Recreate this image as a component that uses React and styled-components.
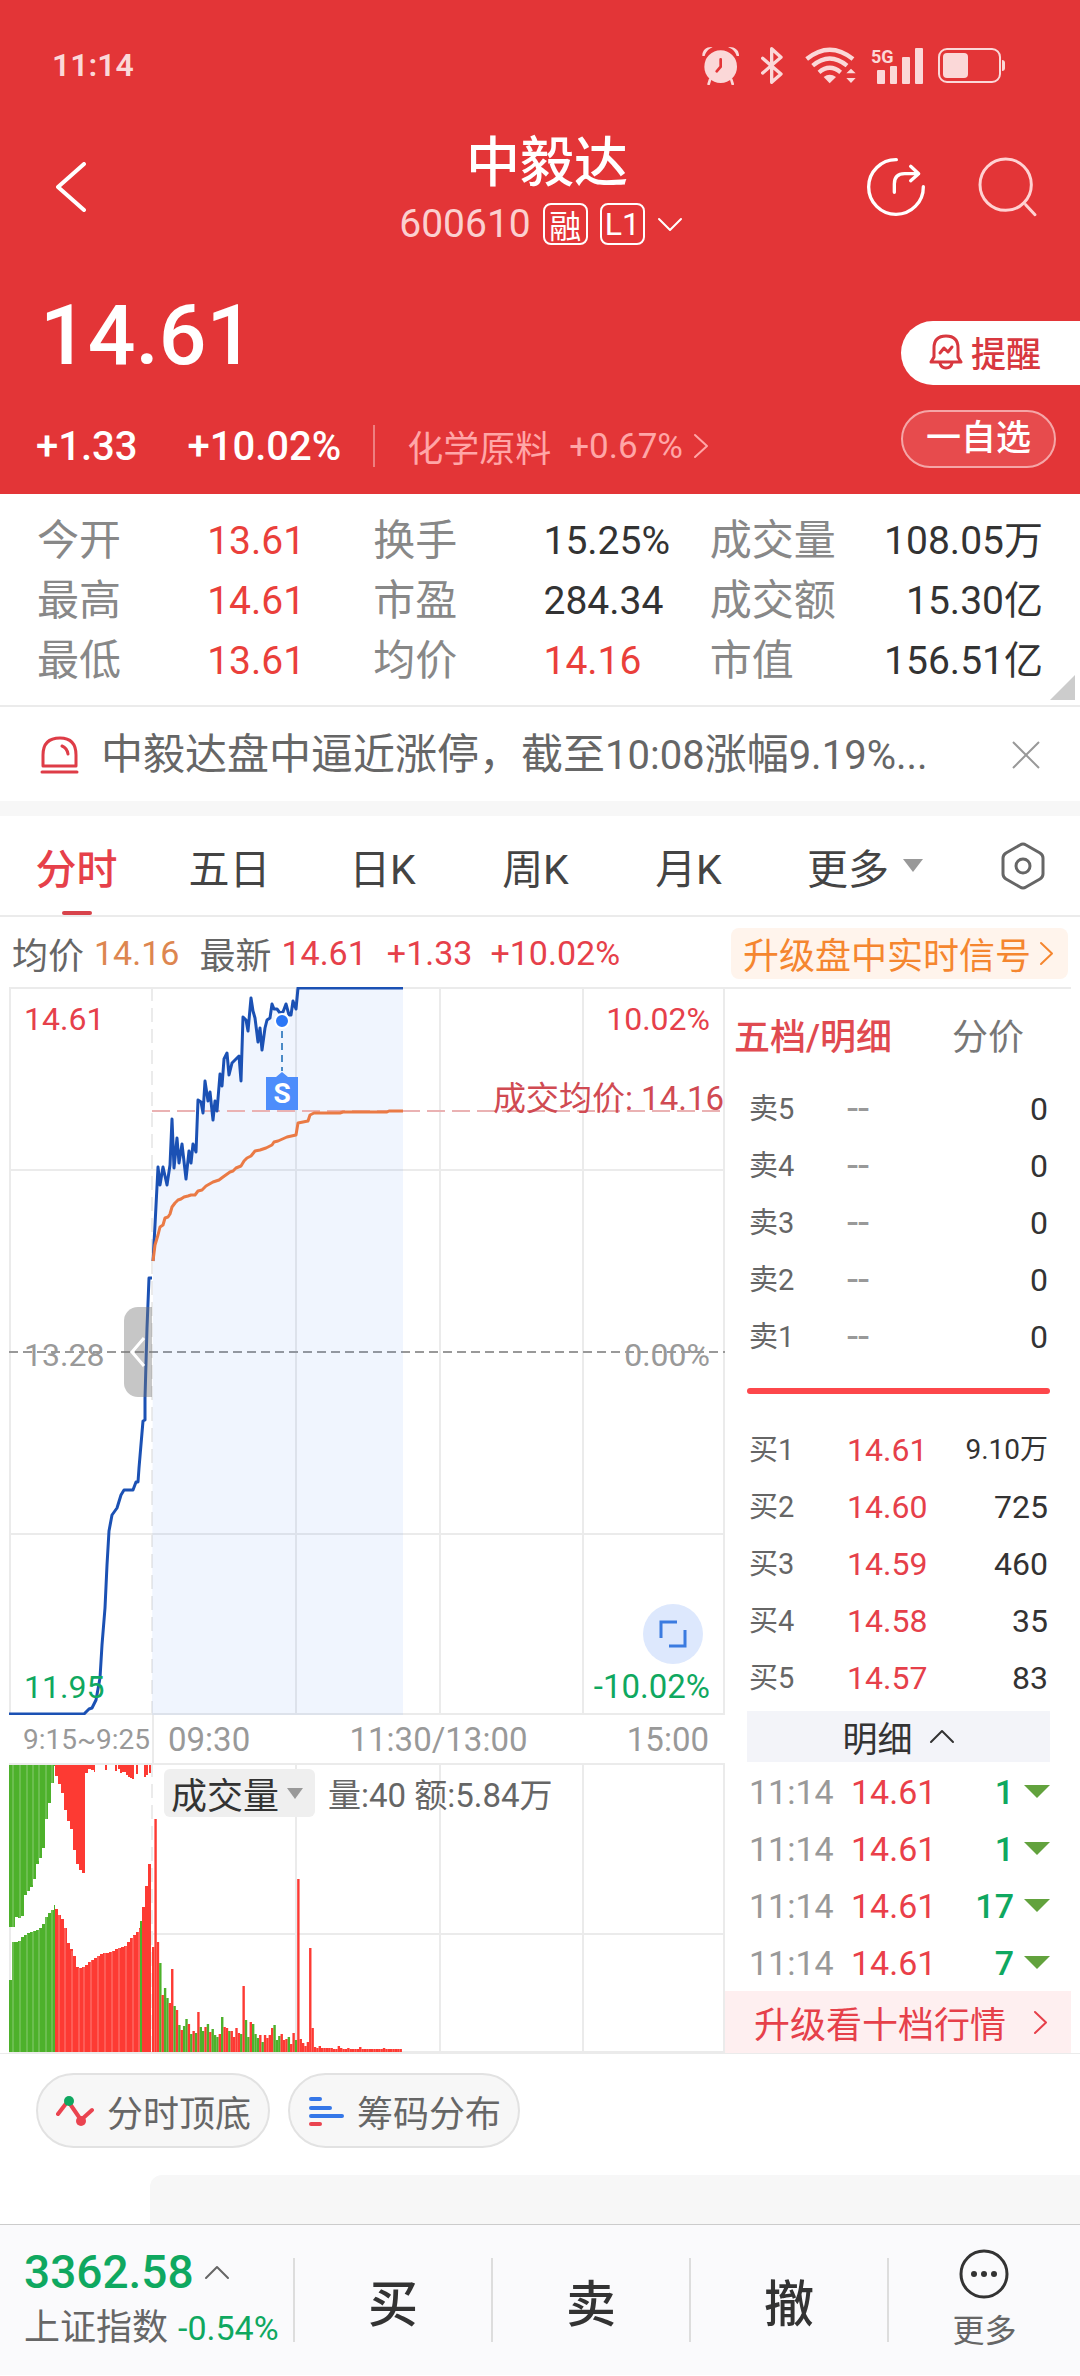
import React from 'react';
import styled, { createGlobalStyle } from 'styled-components';

const RED = '#e33537';
const UP = '#e6404a';
const DOWN = '#0fa860';
const LINE = '#ebebeb';

const GlobalStyle = createGlobalStyle`
	* {
		box-sizing: border-box;
	}
	body {
		margin: 0;
		background: #fff;
		font-family: Roboto, "Noto Sans CJK SC", sans-serif;
		color: #333;
	}
	button {
		margin: 0;
		padding: 0;
		border: 0;
		background: none;
		font: inherit;
		color: inherit;
		cursor: pointer;
	}
	h1, p, dl, dt, dd {
		margin: 0;
		font-weight: 400;
	}
	svg {
		display: block;
		flex: none;
	}
`;

const Page = styled.div`
	display: flex;
	flex-direction: column;
	width: 100%;
`;

/* ---------- header ---------- */

const Header = styled.header`
	background: ${RED};
	color: #fff;
`;

const StatusBar = styled.div`
	display: flex;
	align-items: center;
	height: 130px;
	padding: 0 74px 0 52px;
	color: #fbd8d8;
`;

const Clock = styled.span`
	margin-right: auto;
	font-size: 32px;
	font-weight: 600;
`;

const StatusIcons = styled.div`
	display: flex;
	align-items: center;
	gap: ${(p) => p.$gap}px;
`;

const NavBar = styled.div`
	display: grid;
	grid-template-columns: 1fr auto 1fr;
	align-items: center;
	padding: 0 42px 0 56px;
`;

const NavActions = styled.div`
	display: flex;
	justify-content: flex-end;
	gap: 52px;
`;

const IconButton = styled.button`
	display: flex;
	justify-self: start;
`;

const TitleBlock = styled.div`
	display: flex;
	flex-direction: column;
	align-items: center;
	gap: 6px;
`;

const Title = styled.h1`
	font-size: 54px;
	line-height: 68px;
	font-weight: 500;
`;

const CodeRow = styled.button`
	display: flex;
	align-items: center;
	gap: 12px;
	height: 40px;
	margin-right: 12px;
`;

const Code = styled.span`
	font-size: 39px;
	color: #fbd0d0;
`;

const Badge = styled.span`
	display: flex;
	align-items: center;
	justify-content: center;
	width: 45px;
	height: 42px;
	border: 2px solid #fff;
	border-radius: 8px;
	font-size: 32px;
`;

const Quote = styled.div`
	display: flex;
	justify-content: space-between;
	padding: 56px 0 26px 36px;
`;

const QuoteLeft = styled.div`
	display: flex;
	flex-direction: column;
	gap: 52px;
`;

const Price = styled.p`
	margin-left: 4px;
	font-size: 84px;
	line-height: 72px;
	font-weight: 500;
`;

const ChangeRow = styled.div`
	display: flex;
	align-items: center;
	height: 44px;
	font-size: 40px;
	font-weight: 500;
`;

const Change = styled.span`
	margin-right: ${(p) => p.$gap}px;
`;

const Sector = styled.a`
	display: flex;
	align-items: center;
	gap: 18px;
	height: 42px;
	padding-left: 32px;
	border-left: 2px solid #ee7f80;
	font-size: 36px;
	font-weight: 400;
	color: #ffa6a7;
	text-decoration: none;
`;

const QuoteRight = styled.div`
	display: flex;
	flex-direction: column;
	align-items: flex-end;
	gap: 25px;
	padding-top: 21px;
`;

const RemindButton = styled.button`
	display: flex;
	align-items: center;
	gap: 8px;
	width: 179px;
	height: 64px;
	padding: 0 0 3px 28px;
	border-radius: 32px 0 0 32px;
	background: #fff;
	color: #d8383f;
	font-size: 35px;
	font-weight: 500;
`;

const WatchButton = styled.button`
	width: 155px;
	height: 58px;
	margin-right: 24px;
	border: 2px solid #f5a6a7;
	border-radius: 29px;
	background: #e74b4d;
	font-size: 35px;
	font-weight: 500;
	line-height: 50px;
`;

/* ---------- stats and notice ---------- */

const Stats = styled.dl`
	position: relative;
	display: grid;
	grid-template-columns: 170fr 166fr 170fr 166fr 150fr 183fr;
	grid-auto-rows: 60px;
	align-items: center;
	padding: 17px 37px 14px 37px;
	border-bottom: 2px solid ${LINE};
`;

const StatLabel = styled.dt`
	font-size: 42px;
	line-height: 60px;
	color: #888;
	white-space: nowrap;
`;

const StatValue = styled.dd`
	font-size: 39px;
	line-height: 60px;
	color: ${(p) => (p.$up ? '#ea3f3b' : '#333')};
	text-align: ${(p) => (p.$last ? 'right' : 'left')};
	white-space: nowrap;
`;

const Corner = styled.div`
	position: absolute;
	right: 5px;
	bottom: 5px;
	border-left: 25px solid transparent;
	border-bottom: 25px solid #ccc;
`;

const Notice = styled.div`
	display: flex;
	align-items: center;
	height: 94px;
	padding: 2px 40px 0;
`;

const NoticeText = styled.p`
	flex: 1;
	margin-left: 22px;
	font-size: 42px;
	line-height: 60px;
	color: #666;
	white-space: nowrap;
	overflow: hidden;
`;

const Num = styled.span`
	font-size: 40px;
`;

const Divider = styled.div`
	height: 15px;
	background: #f7f7f7;
`;

/* ---------- period tabs ---------- */

const Tabs = styled.nav`
	display: grid;
	grid-template-columns: repeat(5, 153fr) 200fr 115fr;
	height: 101px;
	border-bottom: 2px solid ${LINE};
`;

const Tab = styled.button`
	position: relative;
	display: flex;
	align-items: center;
	justify-content: center;
	gap: 14px;
	font-size: 41px;
	font-weight: ${(p) => (p.$active ? 500 : 400)};
	color: ${(p) => (p.$active ? UP : '#444')};

	&::after {
		content: '';
		display: ${(p) => (p.$active ? 'block' : 'none')};
		position: absolute;
		bottom: 0;
		width: 30px;
		height: 4px;
		border-radius: 2px;
		background: #d8434b;
	}
`;

const Triangle = styled.span`
	border: ${(p) => p.$size}px solid transparent;
	border-top: ${(p) => p.$drop}px solid ${(p) => p.$color};
	border-bottom: 0;
`;

const InfoRow = styled.div`
	display: flex;
	align-items: center;
	gap: 20px;
	height: 70px;
	padding: 2px 12px 0;
	font-size: 36px;
	color: #666;
`;

const InfoGroup = styled.span`
	display: flex;
	align-items: center;
	gap: ${(p) => p.$gap || 10}px;
	white-space: nowrap;
`;

const InfoNum = styled.span`
	font-size: ${(p) => p.$size || 34}px;
	color: ${(p) => p.$color};
`;

const SignalLink = styled.a`
	display: flex;
	align-items: center;
	gap: 8px;
	height: 51px;
	margin-left: auto;
	padding: 0 14px 0 12px;
	border-radius: 8px;
	background: #fff4ec;
	color: #f5862f;
	text-decoration: none;
	white-space: nowrap;
`;

/* ---------- charts ---------- */

const Board = styled.main`
	display: grid;
	grid-template-columns: 716fr 346fr;
	padding: 0 9px;
	border-bottom: 1px solid ${LINE};
`;

const Charts = styled.section`
	display: flex;
	flex-direction: column;
	min-width: 0;
`;

const ChartBox = styled.div`
	position: relative;

	> svg {
		width: 100%;
		height: auto;
	}
`;

const Mark = styled.span`
	position: absolute;
	${(p) => p.$side}: ${(p) => p.$inset}px;
	${(p) => p.$edge || 'top'}: ${(p) => p.$at}px;
	font-size: ${(p) => p.$size || 32}px;
	line-height: 40px;
	color: ${(p) => p.$color};
	white-space: nowrap;
`;

const Handle = styled.button`
	position: absolute;
	left: 16%;
	top: 44%;
	display: flex;
	align-items: center;
	justify-content: center;
	width: 28px;
	height: 90px;
	border-radius: 14px 0 0 14px;
	background: rgba(118, 118, 118, 0.42);
`;

const ExpandButton = styled.button`
	position: absolute;
	right: 22px;
	bottom: 51px;
	display: flex;
	align-items: center;
	justify-content: center;
	width: 60px;
	height: 60px;
	border-radius: 30px;
	background: #dde8fd;
`;

const Axis = styled.div`
	display: grid;
	grid-template-columns: 143fr 573fr;
	height: 48px;
	line-height: 50px;
	font-size: 33px;
	color: #999;
`;

const AuctionTime = styled.span`
	padding-right: 2px;
	font-size: 28px;
	text-align: right;
`;

const SessionTimes = styled.div`
	display: flex;
	justify-content: space-between;
	padding: 0 16px 0 14px;
	border-left: 2px solid ${LINE};
`;

const VolumeHead = styled.div`
	position: absolute;
	left: 155px;
	top: 6px;
	display: flex;
	align-items: center;
	gap: 13px;
	font-size: 33px;
	color: #666;
`;

const VolumeButton = styled.button`
	display: flex;
	align-items: center;
	gap: 8px;
	height: 48px;
	padding: 0 12px 0 7px;
	border-radius: 6px;
	background: #efefef;
	font-size: 36px;
	color: #333;
`;

/* ---------- order book ---------- */

const Book = styled.aside`
	display: flex;
	flex-direction: column;
	border-top: 2px solid ${LINE};
`;

const BookTabs = styled.div`
	display: flex;
	gap: 60px;
	height: 91px;
	padding: 0 0 0 9px;
`;

const BookTab = styled.button`
	height: 90px;
	font-size: 36px;
	color: ${(p) => (p.$active ? '#e04a50' : '#777')};
	font-weight: ${(p) => (p.$active ? 500 : 400)};
`;

const Table = styled.table`
	margin: 0 21px 0 22px;
	border-collapse: collapse;
	table-layout: fixed;
	font-size: 32px;

	tr {
		height: 57px;
	}
	th,
	td {
		padding: 0 2px;
		line-height: 40px;
		text-align: left;
		font-weight: 400;
		white-space: nowrap;
	}
	td:last-child {
		text-align: right;
	}
`;

const Level = styled.th`
	width: 98px;
	font-size: 29px;
	color: #666;
`;

const LevelPrice = styled.td`
	color: ${(p) => (p.$empty ? '#999' : UP)};
	font-size: ${(p) => (p.$empty ? 40 : 32)}px;
`;

const LevelQty = styled.td`
	font-size: ${(p) => (p.$long ? 28 : 32)}px;
`;

const BidWrap = styled.div`
	display: flex;
	align-items: center;
	height: 56px;
	margin: 0 21px 0 22px;
	padding-bottom: 4px;
`;

const BidBar = styled.div`
	flex: 1;
	height: 6px;
	border-radius: 3px;
	background: #fd474b;
`;

const DetailButton = styled.button`
	display: flex;
	align-items: center;
	justify-content: center;
	gap: 16px;
	height: 51px;
	margin: 5px 21px 1px 22px;
	background: #f3f4f9;
	font-size: 35px;
`;

const TickTable = styled(Table)`
	font-size: 34px;
`;

const TickTime = styled.td`
	width: 102px;
	color: #999;
`;

const TickPrice = styled.td`
	color: #ea3f49;
`;

const TickQty = styled.div`
	display: flex;
	align-items: center;
	justify-content: flex-end;
	gap: 10px;
	margin-right: -2px;
	color: ${DOWN};
	font-weight: 500;
`;

const Upgrade = styled.a`
	display: flex;
	align-items: center;
	justify-content: space-between;
	flex: 1;
	padding: 0 23px 0 29px;
	background: #feeff0;
	font-size: 36px;
	color: ${UP};
	text-decoration: none;
	white-space: nowrap;
`;

/* ---------- tools and footer ---------- */

const Tools = styled.div`
	display: flex;
	gap: 18px;
	padding: 19px 36px 27px;
`;

const ToolButton = styled.button`
	display: flex;
	align-items: center;
	gap: 13px;
	height: 75px;
	padding: 0 17px 0 18px;
	border: 2px solid #e2e2e2;
	border-radius: 38px;
	background: #f7f7f7;
	font-size: 36px;
	color: #666;
`;

const NextCard = styled.div`
	height: 49px;
	margin-left: 150px;
	border-radius: 12px 0 0 0;
	background: #f7f7f7;
`;

const Footer = styled.footer`
	display: grid;
	grid-template-columns: 293fr 198fr 198fr 198fr 193fr;
	align-items: center;
	height: 151px;
	border-top: 1px solid #ccc;
	background: #fafafc;
`;

const IndexButton = styled.button`
	display: flex;
	flex-direction: column;
	gap: 8px;
	padding-left: 24px;
	font-size: 36px;
	line-height: 48px;
	color: #666;
	white-space: nowrap;
`;

const IndexLine = styled.span`
	display: flex;
	align-items: center;
	gap: 10px;
`;

const IndexValue = styled.span`
	font-size: 46px;
	font-weight: 500;
	color: ${DOWN};
`;

const IndexChange = styled.span`
	font-size: 34px;
	color: ${DOWN};
`;

const TradeButton = styled.button`
	height: 84px;
	border-left: 2px solid #ddd;
	font-size: 50px;
	font-weight: 500;
`;

const MoreButton = styled.button`
	display: flex;
	flex-direction: column;
	align-items: center;
	gap: 12px;
	font-size: 32px;
	line-height: 40px;
	color: #666;
`;

const MoreWrap = styled.div`
	display: flex;
	align-items: center;
	justify-content: center;
	height: 84px;
	border-left: 2px solid #ddd;
`;

/* ---------- data ---------- */

const stats = [
	['今开', '13.61', true],
	['换手', '15.25%'],
	['成交量', '108.05万'],
	['最高', '14.61', true],
	['市盈', '284.34'],
	['成交额', '15.30亿'],
	['最低', '13.61', true],
	['均价', '14.16', true],
	['市值', '156.51亿'],
];

const asks = [
	['卖5', '--', '0'],
	['卖4', '--', '0'],
	['卖3', '--', '0'],
	['卖2', '--', '0'],
	['卖1', '--', '0'],
];

const bids = [
	['买1', '14.61', '9.10万'],
	['买2', '14.60', '725'],
	['买3', '14.59', '460'],
	['买4', '14.58', '35'],
	['买5', '14.57', '83'],
];

const ticks = [1, 1, 17, 7];

const auctionLine =
	'0,727 75,727 80,722 83,721 87,713 91,691 93,658 96,621 98,578 100,544 103,528 108,521 112,508 115,503 124,503 127,495 129,495 130,481 134,434 136,433 136,411 138,341 140,291 143,291';

const priceLine =
	'144,274 146,238 149,180 151,198 154,180 158,198 161,178 163,132 165,181 168,151 170,176 173,157 177,192 180,164 182,176 184,157 187,165 189,113 192,115 194,126 196,94 199,114 201,105 204,133 206,114 208,124 211,87 213,99 215,72 218,66 220,88 223,76 227,72 230,69 232,94 234,30 237,33 239,44 242,11 244,24 246,31 249,55 251,41 253,63 256,41 258,33 261,31 263,17 265,22 268,22 271,26 274,25 277,17 280,28 282,28 284,14 287,22 289,1 394,1';

const averageLine =
	'144,274 146,258 149,248 151,240 154,238 156,231 159,230 161,227 163,220 166,216 169,213 172,212 175,210 179,209 182,208 186,208 189,204 193,203 197,199 204,195 210,193 214,190 221,185 224,184 227,181 232,179 235,174 238,171 242,169 246,164 251,163 257,161 263,158 265,155 269,154 278,150 287,148 289,136 294,135 299,134 301,128 305,126 331,126 334,125 378,125 380,124 394,124';

// auction envelopes: [x, y] corners, filled in with 3px bars
const unmatchedSell = [[0, 164], [4, 164], [6, 153], [9, 156], [13, 153], [16, 132], [19, 128], [24, 122], [27, 103], [30, 98], [34, 85], [36, 60], [39, 48], [42, 25], [44, 14], [46, 3]];
const unmatchedBuy = [[46, 10], [49, 18], [53, 30], [56, 47], [59, 58], [63, 68], [66, 97], [69, 103], [72, 109], [75, 111], [76, 13], [78, 6], [83, 7], [86, 9]];
const matchedSell = [[0, 242], [2, 191], [4, 179], [10, 178], [15, 172], [21, 169], [30, 166], [34, 161], [36, 156], [39, 151], [42, 149], [46, 142]];
const matchedBuy = [[46, 144], [50, 152], [53, 156], [56, 165], [59, 180], [62, 186], [65, 193], [67, 204], [71, 205], [77, 202], [81, 198], [86, 195], [92, 191], [100, 189], [108, 186], [116, 183], [118, 180], [122, 175], [126, 171], [131, 165]];
const strayBuys = [[96, 5], [106, 6], [109, 4], [111, 8], [113, 7], [115, 7], [117, 10], [119, 12], [121, 13], [123, 14], [127, 9], [135, 12], [137, 10], [140, 8]];

const minuteVolume =
	'105r 233r 110r 89g 57r 64g 54g 49r 83r 46g 42r 27g 22r 26g 33g 28r 18g 21r 19g 40r 25g 21g 25r 28g 20r 23g 17g 15g 18r 35g 25r 24r 21g 21r 15r 24r 19r 18g 66r 32g 15g 30r 28g 18g 14g 17r 10g 17r 14r 17r 24r 27g 12g 16g 18r 12r 13r 15g 8r 19r 12g 173r 13r 9r 6r 10r 104r 24r 5r 4r 6r 4r 4r 4r 4r 4r 3r 3r 6r 4r 3r 3r 4r 3r 3r 3r 3r 5r 3r 3r 3r 3r 3r 3r 3r 3r 3r 4r 3r 3r 3r 3r 3r 3r 3r'.split(' ');

const BAR_GREEN = '#4db12b';
const BAR_RED = '#fd3a33';

function levelAt(points, x) {
	const i = points.findIndex((p) => p[0] > x);
	if (i < 0) return points[points.length - 1][1];
	if (i === 0) return points[0][1];
	const [x0, y0] = points[i - 1];
	const [x1, y1] = points[i];
	return Math.round(y0 + ((y1 - y0) * (x - x0)) / (x1 - x0));
}

function Envelope({ points, from, color }) {
	const start = points[0][0];
	const end = points[points.length - 1][0];
	const bars = [];
	for (let x = start; x < end; x += 3) {
		const y = levelAt(points, x + 1);
		bars.push(
			<rect key={x} x={x} width={Math.min(3, end - x)} y={Math.min(y, from)} height={Math.abs(from - y)} fill={color} />
		);
	}
	return <g shapeRendering="crispEdges">{bars}</g>;
}

/* ---------- drawings ---------- */

function Chevron({ dir, width, height, stroke = 2 }) {
	const w = width - 2;
	const h = height - 2;
	const paths = {
		left: `M${w} 2L2 ${height / 2}L${w} ${h}`,
		right: `M2 2L${w} ${height / 2}L2 ${h}`,
		up: `M2 ${h}L${width / 2} 2L${w} ${h}`,
		down: `M2 2L${width / 2} ${h}L${w} 2`,
	};
	return (
		<svg width={width} height={height} fill="none" stroke="currentColor" strokeWidth={stroke}>
			<path d={paths[dir]} strokeLinecap="round" strokeLinejoin="round" />
		</svg>
	);
}

function AlarmIcon() {
	return (
		<svg width="37" height="39" viewBox="42 46 111 117" fill="currentColor">
			<circle cx="98" cy="108" r="49" />
			<path d="M43 76C42 58 56 47 74 49C64 54 54 61 50 76ZM153 76C154 58 140 47 120 49C132 54 142 61 146 76Z" />
			<path d="M66 147L62 160M130 147L134 160" stroke="currentColor" strokeWidth="8" strokeLinecap="round" />
			<path d="M98 86V108L86 122" fill="none" stroke={RED} strokeWidth="8" strokeLinecap="round" />
		</svg>
	);
}

function BluetoothIcon() {
	return (
		<svg width="22" height="39" viewBox="217 46 66 117" fill="none" stroke="currentColor" strokeWidth="10">
			<path d="M222 83L277 130L249 155V54L277 80L222 127" strokeLinejoin="round" strokeLinecap="round" />
		</svg>
	);
}

function WifiIcon() {
	return (
		<svg width="51" height="39" viewBox="348 46 153 117" fill="none" stroke="currentColor" strokeWidth="13">
			<path d="M353 85Q422 29 492 85M371 105Q422 62 474 105M390 125Q422 98 455 125" />
			<path d="M404 139Q422 126 441 139L422 158Z" fill="currentColor" stroke="none" />
			<path d="M472 128L486 114L500 128ZM472 142L486 157L500 142Z" fill="currentColor" stroke="none" />
		</svg>
	);
}

function SignalIcon() {
	return (
		<svg width="52" height="40" viewBox="0 0 52 40" fill="currentColor">
			<text x="0" y="18" fontSize="18" fontWeight="700">5G</text>
			<rect x="6" y="25" width="8" height="14" rx="1" />
			<rect x="19" y="21" width="7" height="18" rx="1" />
			<rect x="31" y="12" width="8" height="27" rx="1" />
			<rect x="44" y="3" width="8" height="36" rx="1" />
		</svg>
	);
}

function BatteryIcon() {
	return (
		<svg width="68" height="35" viewBox="0 0 68 35">
			<rect x="1" y="1" width="61" height="33" rx="8" fill="none" stroke="currentColor" strokeWidth="2" />
			<rect x="5" y="5" width="25" height="25" rx="4" fill="currentColor" />
			<path d="M64 12Q67 12 67 15V20Q67 23 64 23Z" fill="currentColor" />
		</svg>
	);
}

function ShareIcon() {
	return (
		<svg width="60" height="60" viewBox="522 378 180 180" fill="none" stroke="currentColor" strokeWidth="10" strokeLinecap="round" strokeLinejoin="round">
			<path d="M613 386A82 82 0 1 0 694 467" />
			<path d="M607 484V459Q607 428 638 428H680M656 406L680 428L656 449" />
		</svg>
	);
}

function SearchIcon() {
	return (
		<svg width="60" height="60" viewBox="862 376 180 180" fill="none" stroke="#ffd2d2" strokeWidth="9" strokeLinecap="round">
			<circle cx="945" cy="459" r="77" />
			<path d="M1005 519L1033 549" />
		</svg>
	);
}

function BellIcon() {
	return (
		<svg width="34" height="36" viewBox="0 0 34 36" fill="none" stroke="currentColor" strokeWidth="3" strokeLinejoin="round" strokeLinecap="round">
			<path d="M5 23V14Q5 2 17 2Q29 2 29 14V23L32 28H2L5 23Z" />
			<path d="M11 29Q12 34 17 34Q22 34 23 29" />
			<path d="M11 19L15 14L19 18L23 13" />
		</svg>
	);
}

function SirenIcon() {
	return (
		<svg width="39" height="39" viewBox="0 0 39 39" fill="none" stroke="#de3c47" strokeWidth="3">
			<path d="M3 30V19Q3 2 20 2Q36 2 36 19V30Z" strokeLinejoin="round" />
			<path d="M2 36H37" strokeLinecap="round" />
			<path d="M22 10Q27 12 28 18" strokeLinecap="round" />
		</svg>
	);
}

function CloseIcon() {
	return (
		<svg width="28" height="28" viewBox="0 0 28 28" stroke="#999" strokeWidth="2">
			<path d="M1 1L27 27M27 1L1 27" />
		</svg>
	);
}

function SettingsIcon() {
	return (
		<svg width="44" height="48" viewBox="0 0 44 48" fill="none" stroke="#666" strokeWidth="3" strokeLinejoin="round">
			<path d="M19 3Q22 1 25 3L39 11Q42 13 42 16V32Q42 35 39 37L25 45Q22 47 19 45L5 37Q2 35 2 32V16Q2 13 5 11Z" />
			<circle cx="22" cy="24" r="7" />
		</svg>
	);
}

function PriceChart() {
	return (
		<svg viewBox="0 0 716 728" role="img" aria-label="分时走势">
			<g stroke={LINE} strokeWidth="2" fill="none">
				<path d="M0 1H716M0 183H716M0 547H716M0 727H716" />
				<path d="M1 0V728M287 0V728M431 0V728M574 0V728M715 0V728" />
				<path d="M143 0V728" strokeDasharray="14 7" />
			</g>
			<path d="M0 365H716" stroke="#999" strokeWidth="2" strokeDasharray="9 5" />
			<polygon points={`143,728 ${priceLine} 394,728`} fill="#3f7df0" fillOpacity="0.08" />
			<path d="M143 124H716" stroke="#eab2b3" strokeWidth="2" strokeDasharray="18 7" />
			<g fill="none" strokeWidth="3" strokeLinejoin="round">
				<polyline points={auctionLine} stroke="#1b51b4" />
				<polyline points={priceLine} stroke="#1b51b4" />
				<polyline points={averageLine} stroke="#ea7a45" />
			</g>
			<path d="M273 44V84" stroke="#4a8ac6" strokeWidth="2" strokeDasharray="7 5" />
			<circle cx="273" cy="34" r="7" fill="#2a76f6" stroke="#fff" strokeWidth="2" />
			<path d="M257 90H267L273 85L279 90H289V123H257Z" fill="#4d8dfb" />
			<text x="273" y="116" fontSize="28" fontWeight="700" textAnchor="middle" fill="#fff">S</text>
		</svg>
	);
}

function VolumeChart() {
	return (
		<svg viewBox="0 0 716 290" role="img" aria-label="成交量">
			<g stroke={LINE} strokeWidth="2" fill="none">
				<path d="M0 1H716M143 171H716M0 289H716" />
				<path d="M1 0V290M287 0V290M431 0V290M574 0V290M715 0V290" />
				<path d="M143 0V290" strokeDasharray="14 7" />
			</g>
			<Envelope points={unmatchedSell} from={2} color={BAR_GREEN} />
			<Envelope points={unmatchedBuy} from={2} color={BAR_RED} />
			<Envelope points={matchedSell} from={289} color={BAR_GREEN} />
			<Envelope points={matchedBuy} from={289} color={BAR_RED} />
			<g fill={BAR_RED}>
				{strayBuys.map(([x, h]) => (
					<rect key={x} x={x} y="2" width="2" height={h} />
				))}
				<rect x="133" y="144" width="3" height="145" />
				<rect x="136" y="123" width="3" height="166" />
				<rect x="139" y="101" width="3" height="188" />
				<rect x="131" y="158" width="2" height="131" fill={BAR_GREEN} />
			</g>
			<g stroke="#fff" strokeOpacity="0.35">
				{[4, 11, 18, 24, 30, 37, 43].map((x) => (
					<path key={x} d={`M${x} 2V${levelAt(unmatchedSell, x)}M${x} ${levelAt(matchedSell, x)}V289`} />
				))}
				{[50, 56, 63, 70, 75, 82, 89, 96, 103, 110, 117, 124, 130].map((x) => (
					<path key={x} d={`M${x} ${levelAt(matchedBuy, x)}V289`} />
				))}
			</g>
			{minuteVolume.map((v, i) => {
				const h = parseInt(v, 10);
				return (
					<rect key={i} x={143 + i * 2.38} y={289 - h} width="2.4" height={h} fill={v.endsWith('g') ? BAR_GREEN : BAR_RED} />
				);
			})}
		</svg>
	);
}

function TurningIcon() {
	return (
		<svg width="38" height="36" viewBox="0 0 38 36" fill="none" strokeWidth="4" strokeLinecap="round" strokeLinejoin="round">
			<path d="M2 21L12 8L25 27L36 17" stroke="#ea4450" />
			<circle cx="13" cy="8" r="5" fill={DOWN} />
			<circle cx="25" cy="28" r="5" fill="#ea4450" />
		</svg>
	);
}

function ChipsIcon() {
	return (
		<svg width="36" height="36" viewBox="0 0 36 36" strokeWidth="4" stroke="#3577e8" strokeLinecap="round">
			<path d="M3 6H12M3 15H22M3 23H34" />
			<path d="M3 31H12" stroke="#ea4450" />
		</svg>
	);
}

function MoreIcon() {
	return (
		<svg width="50" height="50" viewBox="0 0 50 50" fill="#333">
			<circle cx="25" cy="25" r="23" fill="none" stroke="#333" strokeWidth="3" />
			<circle cx="15" cy="25" r="3" />
			<circle cx="25" cy="25" r="3" />
			<circle cx="35" cy="25" r="3" />
		</svg>
	);
}

function Levels({ rows }) {
	return (
		<Table>
			<tbody>
				{rows.map(([name, price, qty]) => (
					<tr key={name}>
						<Level scope="row">{name}</Level>
						<LevelPrice $empty={price === '--'}>{price}</LevelPrice>
						<LevelQty $long={qty.endsWith('万')}>{qty}</LevelQty>
					</tr>
				))}
			</tbody>
		</Table>
	);
}

export default function App() {
	return (
		<Page lang="zh-CN">
			<GlobalStyle />
			<Header>
				<StatusBar>
					<Clock>11:14</Clock>
					<StatusIcons $gap={15}>
						<StatusIcons $gap={22}>
							<AlarmIcon />
							<BluetoothIcon />
							<WifiIcon />
						</StatusIcons>
						<SignalIcon />
						<BatteryIcon />
					</StatusIcons>
				</StatusBar>
				<NavBar>
					<IconButton aria-label="返回">
						<Chevron dir="left" width={30} height={50} stroke={4} />
					</IconButton>
					<TitleBlock>
						<Title>中毅达</Title>
						<CodeRow>
							<Code>600610</Code>
							<Badge>融</Badge>
							<Badge>L1</Badge>
							<Chevron dir="down" width={26} height={15} />
						</CodeRow>
					</TitleBlock>
					<NavActions>
						<IconButton aria-label="分享"><ShareIcon /></IconButton>
						<IconButton aria-label="搜索"><SearchIcon /></IconButton>
					</NavActions>
				</NavBar>
				<Quote>
					<QuoteLeft>
						<Price>14.61</Price>
						<ChangeRow>
							<Change $gap={50}>+1.33</Change>
							<Change $gap={32}>+10.02%</Change>
							<Sector href="#sector">
								<span>化学原料</span>
								<InfoGroup>
									<InfoNum $color="inherit" $size={35}>+0.67%</InfoNum>
									<Chevron dir="right" width={16} height={26} />
								</InfoGroup>
							</Sector>
						</ChangeRow>
					</QuoteLeft>
					<QuoteRight>
						<RemindButton><BellIcon />提醒</RemindButton>
						<WatchButton>一自选</WatchButton>
					</QuoteRight>
				</Quote>
			</Header>

			<Stats>
				{stats.map(([label, value, up], i) => (
					<React.Fragment key={label}>
						<StatLabel>{label}</StatLabel>
						<StatValue $up={up} $last={i % 3 === 2}>{value}</StatValue>
					</React.Fragment>
				))}
				<Corner />
			</Stats>

			<Notice>
				<SirenIcon />
				<NoticeText>
					中毅达盘中逼近涨停，截至<Num>10:08</Num>涨幅<Num>9.19%...</Num>
				</NoticeText>
				<IconButton aria-label="关闭"><CloseIcon /></IconButton>
			</Notice>
			<Divider />

			<Tabs>
				<Tab $active>分时</Tab>
				<Tab>五日</Tab>
				<Tab>日K</Tab>
				<Tab>周K</Tab>
				<Tab>月K</Tab>
				<Tab>更多<Triangle $size={10} $drop={13} $color="#999" /></Tab>
				<Tab aria-label="设置"><SettingsIcon /></Tab>
			</Tabs>

			<InfoRow>
				<InfoGroup>均价<InfoNum $color="#dd8650">14.16</InfoNum></InfoGroup>
				<InfoGroup>最新<InfoNum $color={UP}>14.61</InfoNum></InfoGroup>
				<InfoGroup $gap={18}>
					<InfoNum $color={UP}>+1.33</InfoNum>
					<InfoNum $color={UP}>+10.02%</InfoNum>
				</InfoGroup>
				<SignalLink href="#signal">
					升级盘中实时信号
					<Chevron dir="right" width={15} height={25} />
				</SignalLink>
			</InfoRow>

			<Board>
				<Charts>
					<ChartBox>
						<PriceChart />
						<Mark $side="left" $inset={15} $at={12} $color={UP}>14.61</Mark>
						<Mark $side="left" $inset={15} $at={348} $color="#999">13.28</Mark>
						<Mark $side="left" $inset={15} $edge="bottom" $at={8} $color={DOWN}>11.95</Mark>
						<Mark $side="right" $inset={15} $at={12} $color={UP}>10.02%</Mark>
						<Mark $side="right" $inset={1} $at={92} $size={33} $color="#d04a52">成交均价: 14.16</Mark>
						<Mark $side="right" $inset={15} $at={348} $color="#999">0.00%</Mark>
						<Mark $side="right" $inset={15} $edge="bottom" $at={8} $size={33} $color={DOWN}>-10.02%</Mark>
						<Handle aria-label="收起集合竞价">
							<svg width="16" height="30" fill="none" stroke="#fff" strokeWidth="3">
								<path d="M14 1L2 15L14 29" />
							</svg>
						</Handle>
						<ExpandButton aria-label="全屏">
							<svg width="28" height="28" fill="none" stroke="#3b7be0" strokeWidth="3">
								<path d="M18 2H2V18M26 10V26H10" />
							</svg>
						</ExpandButton>
					</ChartBox>
					<Axis>
						<AuctionTime>9:15~9:25</AuctionTime>
						<SessionTimes>
							<span>09:30</span>
							<span>11:30/13:00</span>
							<span>15:00</span>
						</SessionTimes>
					</Axis>
					<ChartBox>
						<VolumeChart />
						<VolumeHead>
							<VolumeButton>
								成交量<Triangle $size={8} $drop={11} $color="#999" />
							</VolumeButton>
							<span>量:40 额:5.84万</span>
						</VolumeHead>
					</ChartBox>
				</Charts>

				<Book>
					<BookTabs>
						<BookTab $active>五档/明细</BookTab>
						<BookTab>分价</BookTab>
					</BookTabs>
					<Levels rows={asks} />
					<BidWrap><BidBar /></BidWrap>
					<Levels rows={bids} />
					<DetailButton>
						明细
						<Chevron dir="up" width={26} height={15} />
					</DetailButton>
					<TickTable>
						<tbody>
							{ticks.map((qty, i) => (
								<tr key={i}>
									<TickTime>11:14</TickTime>
									<TickPrice>14.61</TickPrice>
									<td>
										<TickQty>
											{qty}
											<Triangle $size={13} $drop={13} $color="#62a23d" />
										</TickQty>
									</td>
								</tr>
							))}
						</tbody>
					</TickTable>
					<Upgrade href="#level2">
						升级看十档行情
						<Chevron dir="right" width={15} height={25} />
					</Upgrade>
				</Book>
			</Board>

			<Tools>
				<ToolButton><TurningIcon />分时顶底</ToolButton>
				<ToolButton><ChipsIcon />筹码分布</ToolButton>
			</Tools>
			<NextCard />

			<Footer>
				<IndexButton>
					<IndexLine>
						<IndexValue>3362.58</IndexValue>
						<Chevron dir="up" width={26} height={15} />
					</IndexLine>
					<IndexLine>
						上证指数
						<IndexChange>-0.54%</IndexChange>
					</IndexLine>
				</IndexButton>
				<TradeButton>买</TradeButton>
				<TradeButton>卖</TradeButton>
				<TradeButton>撤</TradeButton>
				<MoreWrap>
					<MoreButton><MoreIcon />更多</MoreButton>
				</MoreWrap>
			</Footer>
		</Page>
	);
}
